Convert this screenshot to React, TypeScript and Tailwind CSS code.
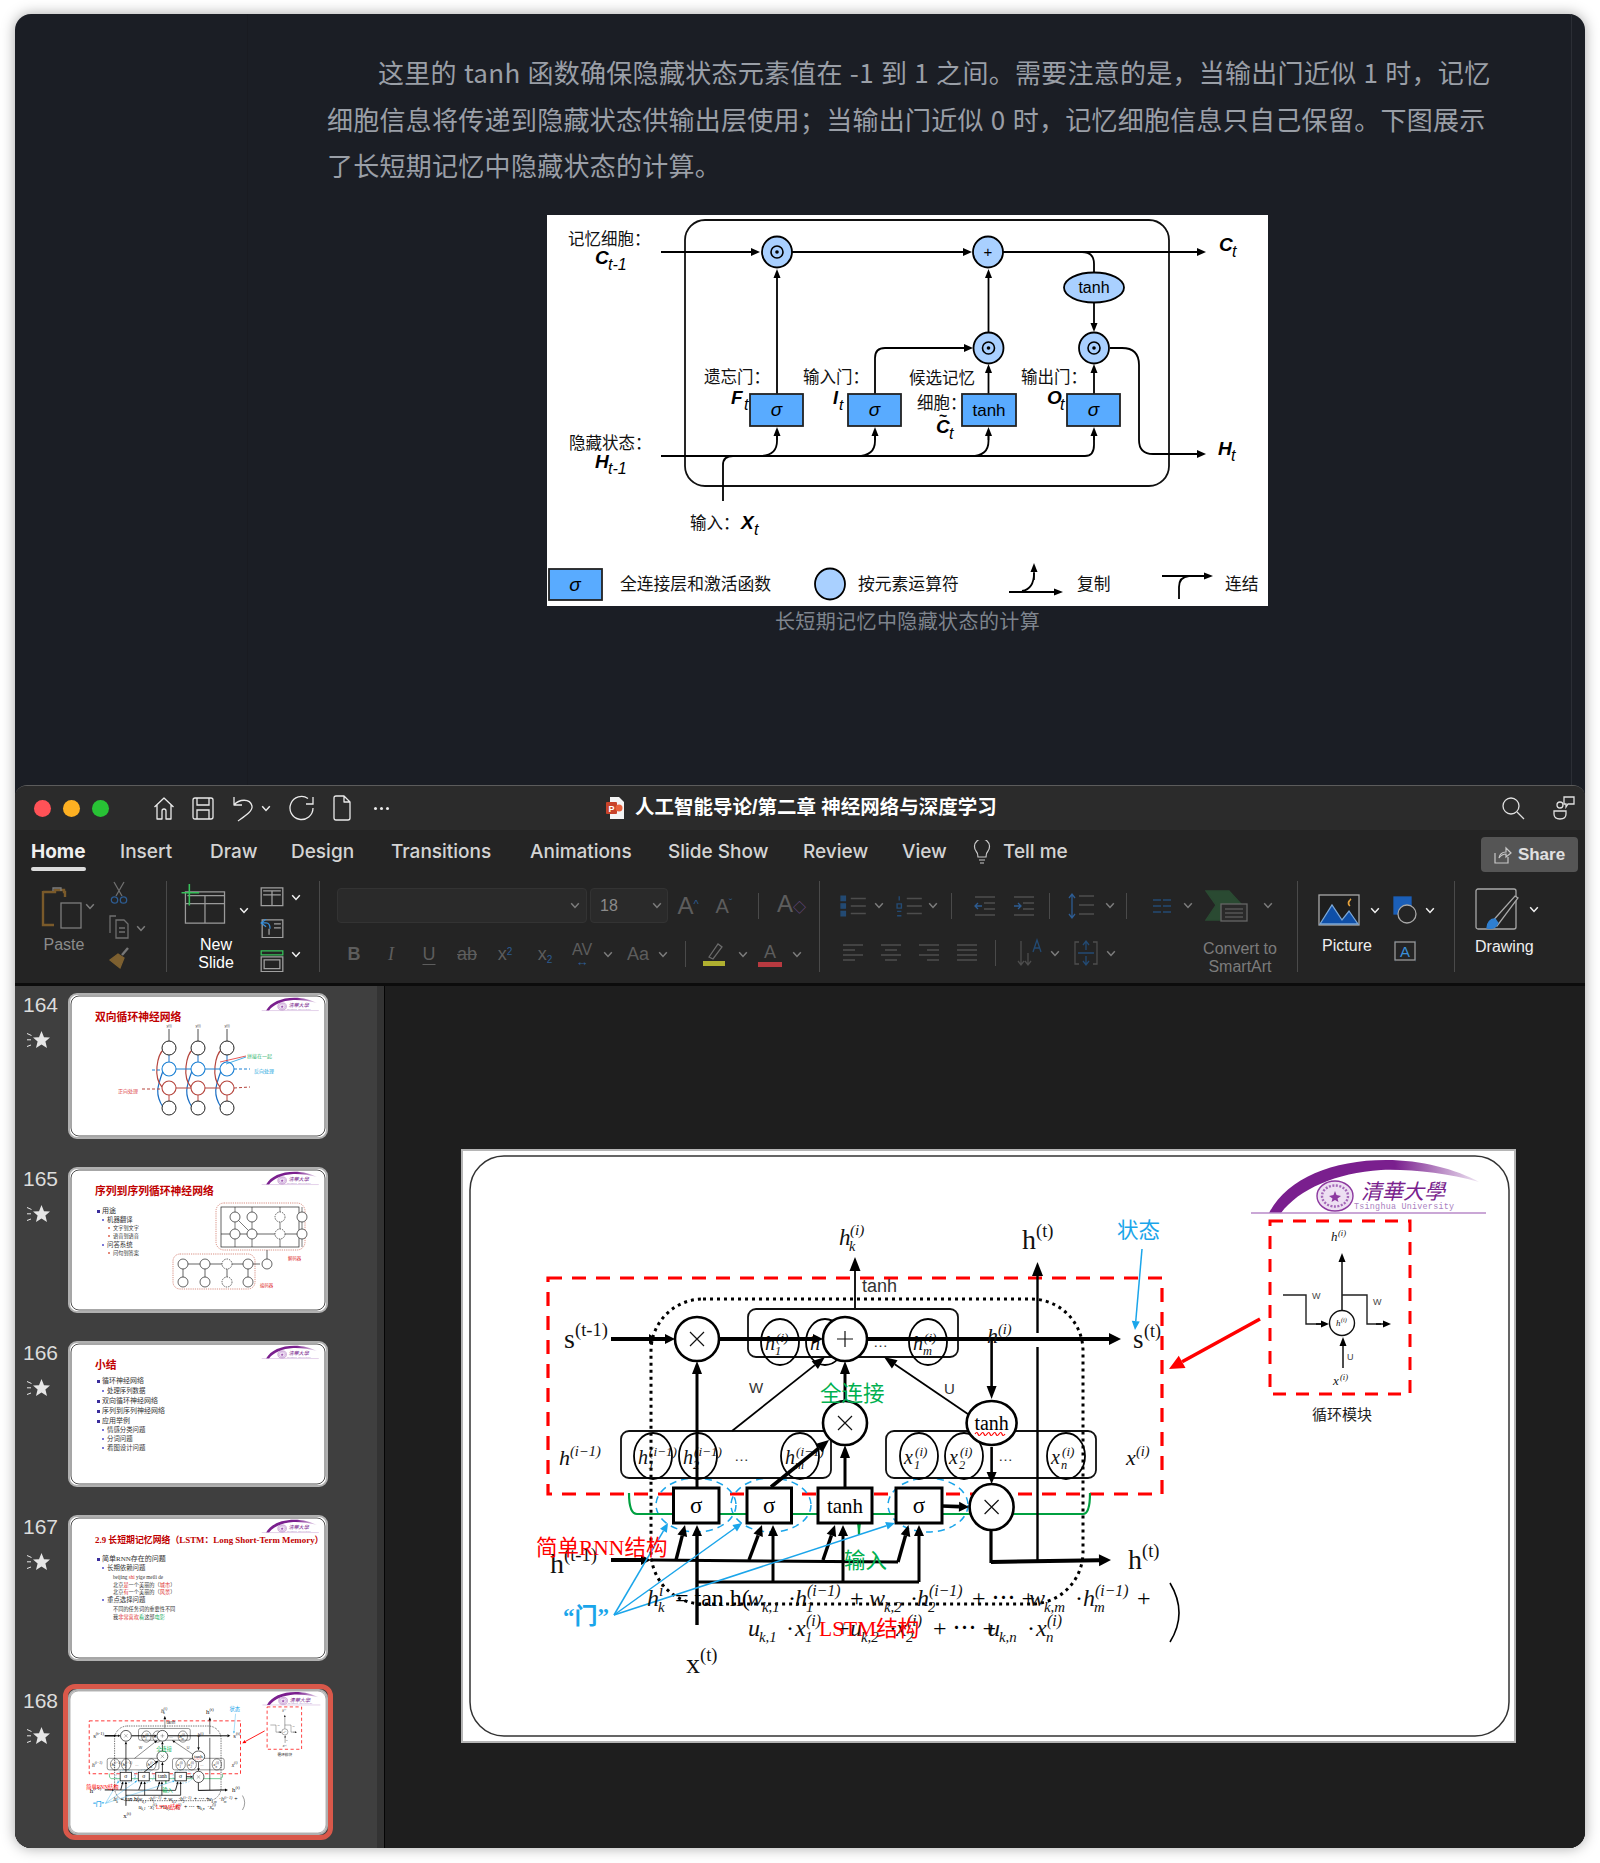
import React from "react";

const SERIF = "'Liberation Serif','Noto Sans CJK SC',serif";
const SANS = "'Liberation Sans','Noto Sans CJK SC',sans-serif";

function Arrow({ x1, y1, x2, y2, w = 2, c = "#000", h = 10, hw = 5 }: { x1: number; y1: number; x2: number; y2: number; w?: number; c?: string; h?: number; hw?: number }) {
  const a = Math.atan2(y2 - y1, x2 - x1);
  const bx = x2 - h * Math.cos(a);
  const by = y2 - h * Math.sin(a);
  const px = hw * Math.sin(a);
  const py = hw * Math.cos(a);
  return (
    <g>
      <line x1={x1} y1={y1} x2={bx} y2={by} stroke={c} strokeWidth={w} />
      <polygon points={`${x2},${y2} ${bx + px},${by - py} ${bx - px},${by + py}`} fill={c} />
    </g>
  );
}

function M({ x, y, b, sup, sub, s = 22, it = true, c = "#111", bw }: { x: number; y: number; b: string; sup?: string; sub?: string; s?: number; it?: boolean; c?: string; bw?: number }) {
  const off = bw ?? s * 0.5 * b.length;
  return (
    <g fill={c} fontFamily={SERIF} fontStyle={it ? "italic" : "normal"}>
      <text x={x} y={y} fontSize={s}>{b}</text>
      {sup && <text x={x + off} y={y - s * 0.42} fontSize={s * 0.66}>{sup}</text>}
      {sub && <text x={x + off - 1} y={y + s * 0.26} fontSize={s * 0.62}>{sub}</text>}
    </g>
  );
}

// ---------- top figure ----------
function GateDot({ x, y }: { x: number; y: number }) {
  return (
    <g>
      <ellipse cx={x} cy={y} rx={15} ry={15.5} fill="#a9d0ff" stroke="#000" strokeWidth={1.8} />
      <circle cx={x} cy={y} r={6} fill="none" stroke="#000" strokeWidth={1.6} />
      <circle cx={x} cy={y} r={1.8} fill="#000" />
    </g>
  );
}

function GateBox({ x, w, label, it = true }: { x: number; w: number; label: string; it?: boolean }) {
  return (
    <g>
      <rect x={x} y={179} width={w} height={32} fill="#59abff" stroke="#222" strokeWidth={1.8} />
      <text x={x + w / 2} y={201} textAnchor="middle" fontSize={it ? 19 : 17} fontStyle={it ? "italic" : "normal"} fill="#000">{label}</text>
    </g>
  );
}

function Sym({ x, y, b, sub, s = 19, off }: { x: number; y: number; b: string; sub: string; s?: number; off?: number }) {
  return (
    <g fontFamily={SANS} fontStyle="italic" fill="#000">
      <text x={x} y={y} fontSize={s} fontWeight="bold">{b}</text>
      <text x={x + (off ?? s * 0.68)} y={y + 6} fontSize={s * 0.85}>{sub}</text>
    </g>
  );
}

function LstmFigure() {
  return (
    <svg width="721" height="391" viewBox="0 0 721 391" className="block bg-white" fontFamily={SANS}>
      <rect x="138" y="5" width="484" height="266" rx="20" fill="none" stroke="#111" strokeWidth="1.8" />
      <Arrow x1={114} y1={37} x2={213} y2={37} h={9} hw={4} />
      <Arrow x1={245} y1={37} x2={425} y2={37} h={9} hw={4} />
      <Arrow x1={456} y1={37} x2={659} y2={37} h={9} hw={4} />
      <path d="M525 37H535Q547 37 547 49V58" fill="none" stroke="#000" strokeWidth="1.8" />
      <Arrow x1={547} y1={88} x2={547} y2={117} w={1.8} h={9} hw={3.5} />
      <Arrow x1={230} y1={179} x2={230} y2={54} w={1.8} h={9} hw={3.5} />
      <path d="M328 179V143Q328 133 338 133H416" fill="none" stroke="#000" strokeWidth="1.8" />
      <Arrow x1={410} y1={133} x2={426} y2={133} h={9} hw={4} />
      <Arrow x1={441.5} y1={179} x2={441.5} y2={149} w={1.8} h={9} hw={3.5} />
      <Arrow x1={441.5} y1={118} x2={441.5} y2={54} w={1.8} h={9} hw={3.5} />
      <Arrow x1={547} y1={179} x2={547} y2={149} w={1.8} h={9} hw={3.5} />
      <path d="M563 133H575Q592 133 592 150V225Q592 239 606 239H650" fill="none" stroke="#000" strokeWidth="1.8" />
      <Arrow x1={640} y1={239} x2={659} y2={239} h={9} hw={4} />
      <path d="M114 241H538Q547 241 547 230V220M212 241Q230 241 230 226V220M310 241Q328 241 328 226V220M424 241Q441.5 241 441.5 226V220" fill="none" stroke="#000" strokeWidth="1.8" />
      <Arrow x1={230} y1={225} x2={230} y2={212} w={1.5} h={9} hw={3.5} />
      <Arrow x1={328} y1={225} x2={328} y2={212} w={1.5} h={9} hw={3.5} />
      <Arrow x1={441.5} y1={225} x2={441.5} y2={212} w={1.5} h={9} hw={3.5} />
      <Arrow x1={547} y1={225} x2={547} y2={212} w={1.5} h={9} hw={3.5} />
      <path d="M176 286V250Q176 241 186 241" fill="none" stroke="#000" strokeWidth="1.8" />

      <GateDot x={230} y={37} />
      <ellipse cx={441} cy={37} rx={15} ry={15.5} fill="#a9d0ff" stroke="#000" strokeWidth="1.8" />
      <text x={441} y={42} textAnchor="middle" fontSize="15">+</text>
      <GateDot x={441.5} y={133} />
      <GateDot x={547} y={133} />
      <ellipse cx={547} cy={72.5} rx={30} ry={15} fill="#a9d0ff" stroke="#000" strokeWidth="1.8" />
      <text x={547} y={78} textAnchor="middle" fontSize="16">tanh</text>
      <GateBox x={203} w={53} label="σ" />
      <GateBox x={301} w={53} label="σ" />
      <GateBox x={415} w={54} label="tanh" it={false} />
      <GateBox x={520} w={53} label="σ" />

      <g fontSize="16.5" fill="#111">
        <text x={21} y={30}>记忆细胞：</text>
        <text x={22} y={234}>隐藏状态：</text>
        <text x={157} y={168}>遗忘门：</text>
        <text x={256} y={168}>输入门：</text>
        <text x={362} y={169}>候选记忆</text>
        <text x={370} y={194}>细胞：</text>
        <text x={474} y={168}>输出门：</text>
        <text x={143} y={314}>输入：</text>
      </g>
      <Sym x={48} y={49} b="C" sub="t-1" />
      <Sym x={48} y={253} b="H" sub="t-1" />
      <Sym x={184} y={189} b="F" sub="t" />
      <Sym x={286} y={189} b="I" sub="t" s={18} off={6} />
      <Sym x={389} y={218} b="C" sub="t" />
      <text x={392} y={206} fontSize="14" fontWeight="bold">~</text>
      <Sym x={500} y={189} b="O" sub="t" />
      <Sym x={672} y={36} b="C" sub="t" />
      <Sym x={671} y={240} b="H" sub="t" />
      <Sym x={194} y={314} b="X" sub="t" />

      <rect x="2" y="354" width="53" height="31" fill="#59abff" stroke="#222" strokeWidth="1.8" />
      <text x="28" y="376" textAnchor="middle" fontSize="19" fontStyle="italic">σ</text>
      <text x="73" y="375" fontSize="16.8" fill="#111">全连接层和激活函数</text>
      <ellipse cx={283} cy={369} rx={15} ry={15.5} fill="#a9d0ff" stroke="#000" strokeWidth="1.8" />
      <text x="311" y="375" fontSize="16.8" fill="#111">按元素运算符</text>
      <Arrow x1={462} y1={377} x2={516} y2={377} h={9} hw={3.5} />
      <path d="M475 376Q487 374 487 358" fill="none" stroke="#000" strokeWidth="1.8" />
      <Arrow x1={487} y1={365} x2={487} y2={348} w={1.5} h={9} hw={3.5} />
      <text x="530" y="375" fontSize="16.8" fill="#111">复制</text>
      <Arrow x1={615} y1={361} x2={666} y2={361} h={9} hw={3.5} />
      <path d="M632 384V372Q632 362 642 361" fill="none" stroke="#000" strokeWidth="1.8" />
      <text x="678" y="375" fontSize="16.8" fill="#111">连结</text>
    </svg>
  );
}

// ---------- slide art ----------
function Logo() {
  return (
    <g>
      <defs>
        <linearGradient id="arc" x1="0" y1="0" x2="1" y2="0">
          <stop offset="0" stopColor="#7a1f8e" />
          <stop offset="0.6" stopColor="#7a1f8e" />
          <stop offset="1" stopColor="#efe6f3" />
        </linearGradient>
      </defs>
      <path d="M808 64C826 30 870 11 925 11C960 11 995 20 1018 33C985 24 950 20 920 21C875 24 838 40 820 64Z" fill="url(#arc)" />
      <line x1="790" y1="64" x2="1025" y2="64" stroke="#b98ac9" strokeWidth="1.6" />
      <ellipse cx="874" cy="47" rx="18" ry="15" fill="#eddff2" stroke="#8d3aa0" strokeWidth="1.4" />
      <ellipse cx="874" cy="47" rx="13" ry="10.5" fill="none" stroke="#a468b8" strokeWidth="2.4" strokeDasharray="2 1.5" />
      <polygon points="874,42 875.5,46 880,47 876.5,49.5 877.5,53 874,51 870.5,53 871.5,49.5 868,47 872.5,46" fill="#8d3aa0" />
      <text x="900" y="50" fontSize="21" fontStyle="italic" fill="#7a1f8e" fontFamily={SERIF}>清華大學</text>
      <text x="893" y="60" fontSize="8.4" fill="#a97fc0" fontFamily="'Liberation Mono',monospace" letterSpacing="0.25">Tsinghua University</text>
    </g>
  );
}

function Node({ x, y, r = 22, ry, mark }: { x: number; y: number; r?: number; ry?: number; mark?: "x" | "+" }) {
  return (
    <g>
      <ellipse cx={x} cy={y} rx={r} ry={ry ?? r} fill="#fff" stroke="#000" strokeWidth="2.6" />
      {mark === "x" && <path d={`M${x - 7} ${y - 7}L${x + 7} ${y + 7}M${x + 7} ${y - 7}L${x - 7} ${y + 7}`} stroke="#111" strokeWidth="1.2" />}
      {mark === "+" && <path d={`M${x - 8} ${y}H${x + 8}M${x} ${y - 8}V${y + 8}`} stroke="#111" strokeWidth="1.2" />}
    </g>
  );
}

function Gate({ x, w, label, s = 20 }: { x: number; w: number; label: string; s?: number }) {
  return (
    <g>
      <rect x={x} y={339} width={w} height={35} fill="#fff" stroke="#000" strokeWidth="3" />
      <text x={x + w / 2} y={364} textAnchor="middle" fontSize={s} fontFamily={SERIF}>{label}</text>
    </g>
  );
}

function Cell({ x, y, b, sup, sub }: { x: number; y: number; b: string; sup: string; sub: string }) {
  return (
    <g>
      <ellipse cx={x} cy={y} rx={19} ry={23} fill="none" stroke="#000" strokeWidth="1.8" />
      <M x={x - 15} y={y + 8} b={b} sup={sup} sub={sub} s={20} bw={11} />
    </g>
  );
}

function LstmSlide() {
  return (
    <g>
      <rect x="9" y="7" width="1039" height="580" rx="34" fill="none" stroke="#333" strokeWidth="1.5" />
      <Logo />
      <rect x="87" y="129" width="614" height="216" fill="none" stroke="#f00" strokeWidth="3.2" strokeDasharray="14 10" />
      <rect x="190" y="150" width="432" height="305" rx="52" fill="none" stroke="#000" strokeWidth="3" strokeDasharray="3 4" />
      <ellipse cx="235" cy="356" rx="40" ry="27" fill="none" stroke="#1aa5ea" strokeWidth="1.5" strokeDasharray="7 5" />
      <ellipse cx="310" cy="356" rx="40" ry="27" fill="none" stroke="#1aa5ea" strokeWidth="1.5" strokeDasharray="7 5" />
      <ellipse cx="467" cy="356" rx="40" ry="27" fill="none" stroke="#1aa5ea" strokeWidth="1.5" strokeDasharray="7 5" />
      <path d="M168 344Q168 365 176 365H390Q398 365 398 386Q398 365 406 365H622Q629 365 629 344" fill="none" stroke="#00a040" strokeWidth="2.2" />

      <rect x="287" y="160" width="210" height="48" rx="8" fill="none" stroke="#111" strokeWidth="1.8" />
      <rect x="160" y="282" width="210" height="47" rx="8" fill="none" stroke="#111" strokeWidth="1.8" />
      <rect x="425" y="282" width="210" height="47" rx="8" fill="none" stroke="#111" strokeWidth="1.8" />
      <Cell x={319} y={193} b="h" sup="(i)" sub="1" />
      <Cell x={364} y={193} b="h" sup="" sub="" />
      <Cell x={467} y={193} b="h" sup="(i)" sub="m" />
      <Cell x={192} y={307} b="h" sup="(i−1)" sub="1" />
      <Cell x={237} y={307} b="h" sup="(i−1)" sub="2" />
      <Cell x={339} y={307} b="h" sup="(i−1)" sub="m" />
      <Cell x={458} y={307} b="x" sup="(i)" sub="1" />
      <Cell x={503} y={307} b="x" sup="(i)" sub="2" />
      <Cell x={605} y={307} b="x" sup="(i)" sub="n" />
      <text x="273" y="312" fontSize="15" fill="#333">…</text>
      <text x="537" y="312" fontSize="15" fill="#333">…</text>
      <text x="412" y="198" fontSize="15" fill="#333">…</text>

      {/* flow lines */}
      <Arrow x1={394} y1={159} x2={394} y2={108} w={1.8} h={14} hw={5.5} />
      <Arrow x1={576.5} y1={184} x2={576.5} y2={113} w={2.4} h={14} hw={5.5} />
      <line x1="576.5" y1="198" x2="576.5" y2="412" stroke="#000" strokeWidth="2.4" />
      <Arrow x1={150} y1={190} x2={214} y2={190} w={4} h={10} hw={5} />
      <line x1="150" y1="190" x2="190" y2="190" stroke="#000" strokeWidth="4" />
      <Arrow x1={190} y1={190} x2={196} y2={190} w={3} h={8} hw={5} />
      <Arrow x1={258} y1={190} x2={362} y2={190} w={4} h={10} hw={5} />
      <Arrow x1={406} y1={190} x2={660} y2={190} w={4} h={12} hw={6} />
      <Arrow x1={236} y1={339} x2={236} y2={212} w={3} h={13} hw={5} />
      <Arrow x1={384} y1={252} x2={384} y2={212} w={3} h={13} hw={5} />
      <Arrow x1={271} y1={282} x2={364} y2={208} w={1.8} h={13} hw={5} />
      <Arrow x1={526} y1={278} x2={423} y2={208} w={1.8} h={13} hw={5} />
      <Arrow x1={530.6} y1={190} x2={530.6} y2={250} w={2.6} h={13} hw={5} />
      <Arrow x1={530.6} y1={298} x2={530.6} y2={335} w={2.6} h={12} hw={5} />
      <Arrow x1={384} y1={339} x2={384} y2={296} w={3} h={13} hw={5} />
      <Arrow x1={310} y1={338} x2={368} y2={291} w={3.6} h={13} hw={5.5} />
      <Arrow x1={481} y1={357} x2={508} y2={358} w={3.6} h={10} hw={5} />

      <Node x={236} y={190} mark="x" />
      <Node x={384} y={190} mark="+" />
      <Node x={384} y={274} mark="x" />
      <Node x={530.6} y={274} r={25} ry={22} />
      <text x={530.6} y={281} textAnchor="middle" fontSize="20" fontFamily={SERIF}>tanh</text>
      <path d="M514 285q2 -3 3 0t3 0 3 0 3 0 3 0 3 0 3 0 3 0 3 0 3 0" fill="none" stroke="#f00" strokeWidth="1.2" />
      <Node x={530.6} y={358} r={22} ry={23} mark="x" />

      <line x1="530" y1="381" x2="530" y2="414" stroke="#000" strokeWidth="3.2" />
      <Arrow x1={530} y1={413} x2={650} y2={411} w={4} h={12} hw={6} />
      <Gate x={212.5} w={45.5} label="σ" s={23} />
      <Gate x={286} w={44.5} label="σ" s={23} />
      <Gate x={357} w={54} label="tanh" s={21} />
      <Gate x={435} w={46} label="σ" s={23} />

      <Arrow x1={150} y1={411} x2={190} y2={411} w={4} h={10} hw={5} />
      <line x1="190" y1="411" x2="437" y2="413" stroke="#000" strokeWidth="3" />
      <Arrow x1={215} y1={411} x2={224} y2={376} w={3.4} h={11} hw={5} />
      <Arrow x1={288} y1={411} x2={301} y2={376} w={3.4} h={11} hw={5} />
      <Arrow x1={362} y1={411} x2={374} y2={376} w={3.4} h={11} hw={5} />
      <Arrow x1={437} y1={413} x2={447.5} y2={376} w={3.4} h={11} hw={5} />
      <Arrow x1={236} y1={476} x2={236} y2={376} w={3.4} h={11} hw={5} />
      <line x1="236" y1="433" x2="458" y2="433" stroke="#000" strokeWidth="3" />
      <Arrow x1={312} y1={433} x2={312} y2={376} w={3} h={11} hw={5} />
      <Arrow x1={382} y1={433} x2={382} y2={376} w={3} h={11} hw={5} />
      <Arrow x1={458} y1={433} x2={458} y2={376} w={3} h={11} hw={5} />

      {/* blue callouts */}
      <Arrow x1={153} y1={466} x2={207} y2={374} w={1.5} c="#1aa5ea" h={9} hw={4} />
      <Arrow x1={153} y1={466} x2={281} y2={374} w={1.5} c="#1aa5ea" h={9} hw={4} />
      <Arrow x1={153} y1={466} x2={434} y2={374} w={1.5} c="#1aa5ea" h={9} hw={4} />
      <Arrow x1={681} y1={100} x2={674} y2={181} w={1.5} c="#1aa5ea" h={9} hw={4} />

      {/* labels */}
      <M x={103} y={199} b="s" sup="(t-1)" s={28} it={false} bw={11} />
      <M x={672} y={199} b="s" sup="(t)" s={27} it={false} bw={11} />
      <M x={561} y={100} b="h" sup="(t)" s={28} it={false} bw={14} />
      <M x={667} y={420} b="h" sup="(t)" s={28} it={false} bw={14} />
      <M x={89} y={424} b="h" sup="(t-1)" s={28} it={false} bw={14} />
      <M x={225} y={524} b="x" sup="(t)" s={28} it={false} bw={14} />
      <M x={378} y={96} b="h" sup="(i)" sub="k" s={23} bw={11} />
      <M x={526} y={194} b="h" sup="(i)" s={22} bw={11} />
      <M x={98} y={316} b="h" sup="(i−1)" s={22} bw={11} />
      <M x={665} y={316} b="x" sup="(i)" s={22} bw={10} />
      <text x="401" y="143" fontSize="18" fontFamily={SANS} fill="#333">tanh</text>
      <text x="288" y="244" fontSize="15" fontFamily={SANS} fill="#333">W</text>
      <text x="483" y="245" fontSize="15" fontFamily={SANS} fill="#333">U</text>
      <text x="359" y="252" fontSize="21.5" fill="#00b050" fontFamily={SERIF}>全连接</text>
      <text x="656" y="89" fontSize="21.5" fill="#1aa5ea" fontFamily={SERIF}>状态</text>
      <text x="75" y="406" fontSize="21.5" fill="#f00" fontFamily={SERIF}>简单RNN结构</text>
      <text x="383" y="419" fontSize="21.5" fill="#00b050" fontFamily={SERIF}>输入</text>
      <text x="102" y="475" fontSize="23" fontWeight="bold" fill="#1aa5ea" fontFamily={SERIF}>“门”</text>

      {/* formula */}
      <M x={186} y={457} b="h" sup="i" sub="k" s={24} bw={12} />
      <text x="214" y="457" fontSize="24" fontFamily={SERIF}>= tan h(</text>
      <M x={286} y={457} b="w" sub="k,1" s={24} bw={16} />
      <text x="327" y="457" fontSize="24" fontFamily={SERIF}>·</text>
      <M x={334} y={457} b="h" sup="(i−1)" sub="1" s={24} bw={12} />
      <text x="389" y="457" fontSize="24" fontFamily={SERIF}>+</text>
      <M x={408} y={457} b="w" sub="k,2" s={24} bw={16} />
      <text x="449" y="457" fontSize="24" fontFamily={SERIF}>·</text>
      <M x={456} y={457} b="h" sup="(i−1)" sub="2" s={24} bw={12} />
      <text x="511" y="457" fontSize="24" fontFamily={SERIF}>+ ⋯ +</text>
      <M x={568} y={457} b="w" sub="k,m" s={24} bw={16} />
      <text x="614" y="457" fontSize="24" fontFamily={SERIF}>·</text>
      <M x={622} y={457} b="h" sup="(i−1)" sub="m" s={24} bw={12} />
      <text x="676" y="457" fontSize="24" fontFamily={SERIF}>+</text>
      <M x={287} y={487} b="u" sub="k,1" s={24} bw={12} />
      <text x="325" y="487" fontSize="24" fontFamily={SERIF}>·</text>
      <M x={334} y={487} b="x" sup="(i)" sub="1" s={24} bw={11} />
      <text x="375" y="487" fontSize="24" fontFamily={SERIF}>+</text>
      <M x={389} y={487} b="u" sub="k,2" s={24} bw={12} />
      <text x="428" y="487" fontSize="24" fontFamily={SERIF}>·</text>
      <M x={435} y={487} b="x" sup="(i)" sub="2" s={24} bw={11} />
      <text x="472" y="487" fontSize="24" fontFamily={SERIF}>+ ⋯ +</text>
      <M x={527} y={487} b="u" sub="k,n" s={24} bw={12} />
      <text x="566" y="487" fontSize="24" fontFamily={SERIF}>·</text>
      <M x={575} y={487} b="x" sup="(i)" sub="n" s={24} bw={11} />
      <path d="M709 434Q727 464 709 493" fill="none" stroke="#000" strokeWidth="1.6" />
      <text x="358" y="487" fontSize="21.5" fill="#f00" fontFamily={SERIF}>LSTM结构</text>

      {/* right module */}
      <rect x="809" y="72" width="140" height="173" fill="none" stroke="#f00" strokeWidth="3" strokeDasharray="13 10" />
      <M x={870} y={92} b="h" sup="(i)" s={13} bw={7} />
      <Arrow x1={881} y1={161} x2={881} y2={104} w={1.4} h={9} hw={3.5} />
      <path d="M822 146H845V175H860" fill="none" stroke="#222" strokeWidth="1.4" />
      <Arrow x1={855} y1={175} x2={868} y2={175} w={1.4} h={8} hw={3.5} />
      <path d="M881 146H906V175H920" fill="none" stroke="#222" strokeWidth="1.4" />
      <Arrow x1={915} y1={175} x2={930} y2={175} w={1.4} h={8} hw={3.5} />
      <Arrow x1={882} y1={219} x2={882} y2={188} w={1.4} h={9} hw={3.5} />
      <circle cx="881" cy="174" r="12.5" fill="#fff" stroke="#111" strokeWidth="1.4" />
      <M x={875} y={177} b="h" sup="(i)" s={9} bw={5} />
      <text x="851" y="150" fontSize="9" fontFamily={SANS} fill="#444">W</text>
      <text x="912" y="156" fontSize="9" fontFamily={SANS} fill="#444">W</text>
      <text x="886" y="211" fontSize="9" fontFamily={SANS} fill="#444">U</text>
      <M x={872} y={236} b="x" sup="(i)" s={13} bw={7} />
      <text x="851" y="271" fontSize="15" fontFamily={SERIF} fill="#222">循环模块</text>
      <Arrow x1={799} y1={170} x2={708} y2={220} w={3.6} c="#f00" h={15} hw={7} />
    </g>
  );
}

// ---------- small thumbnails, drawn at 260x146 ----------
const TITLE = "#c00000";

function ThumbFrame({ children, title }: { children?: React.ReactNode; title: string }) {
  return (
    <svg width="256" height="142" viewBox="0 0 256 142" className="block">
      <rect x="1" y="1" width="254" height="140" rx="8" fill="#fff" stroke="#222" strokeWidth="0.8" />
      <g transform="scale(0.2427)"><Logo /></g>
      <text x="25" y="26" fontSize="10.8" fontWeight="bold" fill={TITLE} fontFamily={SERIF}>{title}</text>
      {children}
    </svg>
  );
}

function Bullets({ rows }: { rows: [number, number, string][] }) {
  return (
    <g fontFamily={SERIF} fill="#333">
      {rows.map(([lvl, y, t], i) => {
        const x = lvl === 0 ? 32 : lvl === 1 ? 37 : 43;
        const mc = lvl === 0 ? "#3a2d9c" : lvl === 1 ? "#7b78d8" : "#e58a7a";
        return (
          <g key={i}>
            <rect x={x - 5} y={y - 3} width={lvl === 0 ? 3 : 2} height={lvl === 0 ? 3 : 2} fill={mc} />
            <text x={x} y={y} fontSize={lvl === 0 ? 7 : lvl === 1 ? 6.4 : 5.2}>{t}</text>
          </g>
        );
      })}
    </g>
  );
}

function Thumb164() {
  const xs = [99, 128, 157];
  return (
    <ThumbFrame title="双向循环神经网络">
      {xs.map((x) => (
        <g key={x} fill="none">
          <path d={`M${x - 6} 112C${x - 14} 100 ${x - 12} 92 ${x - 6} 76`} stroke="#1b6fc4" strokeWidth="1.2" />
          <path d={`M${x - 7} 92C${x - 16} 82 ${x - 12} 60 ${x - 5} 54`} stroke="#b5443c" strokeWidth="1.2" />
          <line x1={x} y1="46" x2={x} y2="34" stroke="#222" strokeWidth="0.8" />
          <line x1={x} y1="68" x2={x} y2="60" stroke="#1b6fc4" strokeWidth="1" />
          <line x1={x} y1="106" x2={x} y2="100" stroke="#b5443c" strokeWidth="1" />
          <circle cx={x} cy="53" r="7" fill="#fff" stroke="#222" strokeWidth="1" />
          <circle cx={x} cy="74" r="7" fill="#fff" stroke="#1b80d4" strokeWidth="1.1" />
          <circle cx={x} cy="93" r="7" fill="#fff" stroke="#b5443c" strokeWidth="1.1" />
          <circle cx={x} cy="113" r="7" fill="#fff" stroke="#222" strokeWidth="1" />
          <text x={x} y="32" fontSize="3.6" textAnchor="middle" fill="#444" stroke="none">y(t)</text>
        </g>
      ))}
      <line x1="82" y1="75" x2="92" y2="75" stroke="#1b80d4" strokeWidth="1" strokeDasharray="3 2" />
      <line x1="106" y1="74" x2="121" y2="74" stroke="#1b80d4" strokeWidth="1" />
      <line x1="135" y1="74" x2="150" y2="74" stroke="#1b80d4" strokeWidth="1" />
      <line x1="164" y1="74" x2="180" y2="74" stroke="#1b80d4" strokeWidth="1" strokeDasharray="3 2" />
      <line x1="72" y1="94" x2="92" y2="94" stroke="#b5443c" strokeWidth="1" strokeDasharray="3 2" />
      <line x1="106" y1="93" x2="121" y2="93" stroke="#b5443c" strokeWidth="1" />
      <line x1="135" y1="93" x2="150" y2="93" stroke="#b5443c" strokeWidth="1" />
      <line x1="164" y1="93" x2="180" y2="92" stroke="#b5443c" strokeWidth="1" strokeDasharray="3 2" />
      <line x1="176" y1="61" x2="150" y2="67" stroke="#e03030" strokeWidth="0.8" />
      <line x1="176" y1="62" x2="156" y2="69" stroke="#1b9ae0" strokeWidth="0.8" />
      <text x="177" y="63" fontSize="5" fill="#2db36b" fontFamily={SERIF}>拼接在一起</text>
      <text x="184" y="78" fontSize="5" fill="#2aa9e0" fontFamily={SERIF}>反向处理</text>
      <text x="48" y="98" fontSize="5" fill="#e04a4a" fontFamily={SERIF}>正向处理</text>
    </ThumbFrame>
  );
}

function Thumb165() {
  const top = [165, 182, 210, 232];
  const bottom = [113, 135, 157, 178];
  return (
    <ThumbFrame title="序列到序列循环神经网络">
      <Bullets rows={[[0, 44, "用途"], [1, 53, "机器翻译"], [2, 61, "文字到文字"], [2, 69, "语音到语音"], [1, 78, "问答系统"], [2, 86, "问句到答案"]]} />
      <rect x="146" y="34" width="89" height="47" rx="8" fill="none" stroke="#c9604f" strokeWidth="0.7" strokeDasharray="1.2 1" />
      <rect x="103" y="85" width="82" height="35" rx="7" fill="none" stroke="#c9604f" strokeWidth="0.7" strokeDasharray="1.2 1" />
      <rect x="151" y="38" width="78" height="40" fill="none" stroke="#222" strokeWidth="0.7" />
      <line x1="151" y1="65" x2="229" y2="65" stroke="#222" strokeWidth="0.7" />
      {top.map((x) => <line key={x} x1={x} y1="38" x2={x} y2="78" stroke="#222" strokeWidth="0.6" />)}
      <line x1="165" y1="48" x2="182" y2="65" stroke="#222" strokeWidth="0.6" />
      {top.map((x) => (
        <g key={x} fill="#fff" stroke="#222" strokeWidth="0.7">
          <circle cx={x} cy="48" r="5" strokeDasharray={x === 210 ? "1.5 1" : undefined} />
          <circle cx={x} cy="65" r="5" strokeDasharray={x === 210 ? "1.5 1" : undefined} />
        </g>
      ))}
      <line x1="108" y1="95" x2="190" y2="95" stroke="#222" strokeWidth="0.7" />
      <line x1="197" y1="81" x2="197" y2="90" stroke="#222" strokeWidth="0.7" />
      {bottom.map((x) => (
        <g key={x} fill="#fff" stroke="#222" strokeWidth="0.7">
          <line x1={x} y1="95" x2={x} y2="112" />
          <circle cx={x} cy="95" r="5" strokeDasharray={x === 157 ? "1.5 1" : undefined} />
          <circle cx={x} cy="113" r="5" strokeDasharray={x === 157 ? "1.5 1" : undefined} />
        </g>
      ))}
      <circle cx="197" cy="95" r="5" fill="#fff" stroke="#222" strokeWidth="0.7" />
      <text x="218" y="91" fontSize="4.4" fill="#e03030" fontFamily={SERIF}>解码器</text>
      <text x="190" y="118" fontSize="4.4" fill="#e03030" fontFamily={SERIF}>编码器</text>
    </ThumbFrame>
  );
}

function Thumb166() {
  return (
    <ThumbFrame title="小结">
      <Bullets rows={[[0, 40, "循环神经网络"], [1, 50, "处理序列数据"], [0, 60, "双向循环神经网络"], [0, 70, "序列到序列神经网络"], [0, 80, "应用举例"], [1, 89, "情感分类问题"], [1, 98, "分词问题"], [1, 107, "看图设计问题"]]} />
    </ThumbFrame>
  );
}

function Thumb167() {
  return (
    <ThumbFrame title="">
      <text x="25" y="26" fontSize="8.9" fontWeight="bold" fill={TITLE} fontFamily={SERIF}>2.9 长短期记忆网络（LSTM：Long Short-Term Memory）</text>
      <Bullets rows={[[0, 44, "简单RNN存在的问题"], [1, 53, "长期依赖问题"], [1, 85, "重点选择问题"]]} />
      <g fontFamily={SERIF} fontSize="5.2" fill="#333">
        <text x="43" y="62">beijing <tspan fill="#e03030">shi</tspan> yige meili de</text>
        <text x="43" y="69.5">北京<tspan fill="#e03030">是</tspan>一个美丽的（<tspan fill="#e03030">城市</tspan>）</text>
        <text x="43" y="77">北京<tspan fill="#e03030">有</tspan>一个美丽的（<tspan fill="#e03030">风景</tspan>）</text>
        <text x="43" y="94">不同的任务词的重要性不同</text>
        <text x="43" y="102">我<tspan fill="#e03030">非常喜欢</tspan><tspan fill="#2db36b">看</tspan>这部<tspan fill="#2db36b">电影</tspan></text>
      </g>
    </ThumbFrame>
  );
}

function Thumb168() {
  return (
    <svg width="256" height="142" viewBox="9 7 1039 580" preserveAspectRatio="none" className="block">
      <LstmSlide />
    </svg>
  );
}

function StarMark() {
  return (
    <svg width="24" height="20" viewBox="0 0 24 20" className="mt-[13px] ml-[3px] text-[#e6e6e6]">
      <polygon points="15.5,1 18,7.3 24,7.5 19.4,11.5 21,18 15.5,14.4 10,18 11.6,11.5 7,7.5 13,7.3" fill="currentColor" />
      <path d="M1 3.5 5.5 5.5M1 9.8H5M1 16.5 5 15" stroke="currentColor" strokeWidth="1" />
    </svg>
  );
}

function SlideRow({ n, selected, children }: { n: number; selected?: boolean; children: React.ReactNode }) {
  return (
    <div className="flex h-[146px]">
      <div className="w-[53px] pl-[8px] text-[21px] leading-[24px] text-[#dcdcdc]">
        {n}
        <StarMark />
      </div>
      {selected ? (
        <div className="-m-[5px] rounded-[12px] border-[5px] border-[#d9584a]">
          <div className="h-[146px] w-[260px] rounded-[9px] border-2 border-[#b0b0b0] bg-white">{children}</div>
        </div>
      ) : (
        <div className="h-[146px] w-[260px] rounded-[9px] border-2 border-[#b0b0b0] bg-white">{children}</div>
      )}
    </div>
  );
}

// ---------- ribbon icons ----------
function Chev({ c = "text-[#7c7c7c]" }: { c?: string }) {
  return (
    <svg width="10" height="7" viewBox="0 0 10 7" className={c}>
      <path d="M1.2 1.2 5 5.4 8.8 1.2" fill="none" stroke="currentColor" strokeWidth="1.5" />
    </svg>
  );
}

const W = "text-[#f0f0f0]";

function Ic({ w, h = 20, vb, children, cl = "" }: { w: number; h?: number; vb?: string; children: React.ReactNode; cl?: string }) {
  return (
    <svg width={w} height={h} viewBox={vb ?? `0 0 ${w} ${h}`} fill="none" stroke="currentColor" strokeWidth="1.3" className={cl}>
      {children}
    </svg>
  );
}

function Sep({ h = "h-[26px]", cl = "" }: { h?: string; cl?: string }) {
  return <div className={`w-px bg-[#4a4a4a] ${h} ${cl}`} />;
}

function ListLines({ c = "#4d4d4d" }: { c?: string }) {
  return <path d="M10 3H24M10 10H24M10 17H24" stroke={c} strokeWidth="1.5" />;
}

function AlignIcon({ d }: { d: string }) {
  return (
    <Ic w={24} h={20} cl="text-[#4d4d4d]">
      <path d={d} strokeWidth="1.5" />
    </Ic>
  );
}

function Ribbon() {
  return (
    <div className="flex h-[108px] bg-[#242424] text-[16px] leading-[18px]">
      {/* clipboard */}
      <div className="flex w-[152px] h-[91px] mt-[6px] border-r border-[#4a4a4a]">
        <div className="ml-[24px] w-[50px] flex flex-col items-center">
          <Ic w={42} h={42} cl="-ml-[6px] mt-[6px] text-[#7d7d7d]">
            <path d="M3 5H15V3H24V5H25V10" stroke="#7a5a2a" strokeWidth="2.4" />
            <path d="M3 4V38H14" stroke="#7a5a2a" strokeWidth="2.4" />
            <path d="M13 4V1H21V4" />
            <rect x="21" y="16" width="20" height="25" />
          </Ic>
          <div className="mt-[7px] text-[#8b8b8b]">Paste</div>
        </div>
        <div className="-ml-[7px] mt-[22px] w-[16px] h-[10px] flex justify-center"><Chev /></div>
        <div className="flex flex-col items-center w-[30px] ml-[6px]">
          <Ic w={18} h={24} cl="text-[#6f6f6f]">
            <path d="M4 1 12 15M14 1 6 15" />
            <circle cx="4.5" cy="19" r="3.2" stroke="#2d5c92" />
            <circle cx="13.5" cy="19" r="3.2" stroke="#2d5c92" />
          </Ic>
          <Ic w={24} h={26} cl="mt-[8px] text-[#6f6f6f]">
            <path d="M3 20V3H9M9 7H17L21 11V25H9Z" />
            <path d="M12 15H18M12 19H18" />
          </Ic>
          <Ic w={24} h={24} cl="mt-[7px]">
            <path d="M3 14 13 22 17 12 11 8Z" fill="#7d6030" stroke="#7d6030" />
            <path d="M15 9 21 2" stroke="#777" strokeWidth="2.4" />
          </Ic>
        </div>
        <div className="mt-[44px] ml-[2px]"><Chev /></div>
      </div>

      {/* new slide */}
      <div className="flex w-[153px] h-[91px] mt-[6px] border-r border-[#4a4a4a] text-[#e8e8e8]">
        <div className="ml-[6px] w-[62px] flex flex-col items-center">
          <Ic w={46} h={44} cl="mt-[3px] text-[#9a9a9a]">
            <path d="M4 8H44V40H4Z" />
            <path d="M6 12H44M24 12V40M4 20H44" />
            <path d="M8 0V22M0 9H18" stroke="#37c05a" strokeWidth="1.6" />
          </Ic>
          <div className="mt-[9px] ml-[24px] w-[60px] shrink-0 text-center leading-[18px] text-white">New<br />Slide</div>
        </div>
        <div className="mt-[26px] ml-[4px]"><Chev c={W} /></div>
        <div className="ml-[11px] flex flex-col gap-[12px] items-center">
          <Ic w={24} h={20} cl="mt-[6px] text-[#a0a0a0]"><path d="M1 1H23V19H1ZM3 4H21M12 4V19M3 8H21" /></Ic>
          <Ic w={24} h={20} cl="text-[#a0a0a0]"><path d="M2 1H23V19H2ZM14 5H21M14 9H21M9 10V16" /><path d="M6 0 1 4 6 8M1 4H6Q10 4 10 10" stroke="#3a8fd9" /></Ic>
          <Ic w={24} h={22} cl="text-[#a0a0a0]"><path d="M1 1H23V5H1Z" stroke="#37c05a" /><path d="M1 7H23V22H1ZM4 10H20V19H4Z" /></Ic>
        </div>
        <div className="ml-[7px] flex flex-col justify-between py-[10px] h-[84px] mt-[3px]">
          <Chev c={W} />
          <Chev c={W} />
        </div>
      </div>

      {/* font */}
      <div className="w-[500px] h-[91px] mt-[6px] border-r border-[#4a4a4a] pl-[17px] text-[#5d5d5d]">
        <div className="flex items-center h-[35px] mt-[7px]">
          <div className="flex h-[35px] w-[250px] items-center justify-end pr-[6px] rounded-[4px] bg-[#2a2a2a] border border-[#333]"><Chev /></div>
          <div className="ml-[3px] flex h-[35px] w-[78px] items-center justify-between pl-[9px] pr-[5px] rounded-[4px] bg-[#2a2a2a] border border-[#333] text-[16px] text-[#8b8b8b]">18<Chev /></div>
          <div className="w-[40px] text-center text-[24px] font-['Liberation_Sans']">A<sup className="text-[11px] text-[#2d5c92]">^</sup></div>
          <div className="w-[32px] text-center text-[20px]">A<sup className="text-[11px] text-[#2d5c92]">ˇ</sup></div>
          <Sep h="h-[26px]" cl="ml-[18px]" />
          <div className="ml-[18px] text-[24px] text-[#5d5d5d]">A<span className="text-[13px] text-[#6c4a86]">◇</span></div>
        </div>
        <div className="flex items-center h-[38px] mt-[12px]">
          <div className="w-[34px] text-center text-[18px] font-bold">B</div>
          <div className="w-[40px] text-center text-[18px] italic font-['Liberation_Serif']">I</div>
          <div className="w-[36px] text-center text-[18px] underline underline-offset-4">U</div>
          <div className="w-[40px] text-center text-[18px] line-through">ab</div>
          <div className="w-[36px] text-center text-[18px]">x<sup className="text-[10px] text-[#2d5c92]">2</sup></div>
          <div className="w-[44px] text-center text-[18px]">x<sub className="text-[10px] text-[#2d5c92]">2</sub></div>
          <div className="w-[30px] text-center text-[16px] leading-[15px]">AV<div className="text-[#2d5c92] text-[13px] leading-[10px]">↔</div></div>
          <div className="w-[22px] flex justify-center"><Chev /></div>
          <div className="w-[38px] text-center text-[18px]">Aa</div>
          <div className="w-[12px] flex justify-center"><Chev /></div>
          <Sep h="h-[26px]" cl="ml-[16px]" />
          <div className="ml-[4px] w-[48px] flex justify-center">
            <Ic w={24} h={24} cl="text-[#6a6a6a]">
              <path d="M7 15 16 2 20 5 11 17Z" />
              <rect x="1" y="19" width="22" height="5" fill="#b0b030" stroke="none" />
            </Ic>
          </div>
          <div className="w-[10px] flex justify-center"><Chev /></div>
          <div className="w-[44px] flex flex-col items-center text-[18px] leading-[20px]">A<div className="h-[5px] w-[24px] bg-[#b83a40]" /></div>
          <div className="w-[10px] flex justify-center"><Chev /></div>
        </div>
      </div>

      {/* paragraph */}
      <div className="w-[478px] h-[91px] mt-[6px] border-r border-[#4a4a4a] text-[#5d5d5d]">
        <div className="flex items-center h-[35px] mt-[7px] pl-[20px]">
          <Ic w={28} h={24} vb="0 0 26 20" cl="text-[#4d4d4d]"><path d="M1 1H5V5H1ZM1 8H5V12H1ZM1 15H5V19H1Z" fill="#234a73" stroke="#234a73" /><ListLines /></Ic>
          <div className="ml-[6px] w-[12px]"><Chev /></div>
          <Ic w={28} h={24} vb="0 0 26 20" cl="ml-[10px] text-[#4d4d4d]"><path d="M3 1V5M1 8H5V12H1ZM1 15H5M1 19H5" stroke="#234a73" /><ListLines /></Ic>
          <div className="ml-[4px] w-[12px]"><Chev /></div>
          <Sep cl="ml-[11px]" />
          <Ic w={24} h={24} cl="ml-[21px] text-[#4d4d4d]"><path d="M2 3H22M11 9H22M11 15H22M2 21H22" /><path d="M9 12H2M5 9 2 12 5 15" stroke="#2d5c92" /></Ic>
          <Ic w={24} h={24} cl="ml-[15px] text-[#4d4d4d]"><path d="M2 3H22M11 9H22M11 15H22M2 21H22" /><path d="M2 12H9M6 9 9 12 6 15" stroke="#2d5c92" /></Ic>
          <Sep cl="ml-[13px]" />
          <Ic w={28} h={28} cl="ml-[17px] text-[#4d4d4d]"><path d="M12 4H27M12 13H27M12 22H27" /><path d="M5 2V26M2 6 5 2 8 6M2 22 5 26 8 22" stroke="#2d5c92" /></Ic>
          <div className="ml-[10px] w-[12px]"><Chev /></div>
          <Sep cl="ml-[9px]" />
          <Ic w={20} h={18} cl="ml-[25px] text-[#234a73]"><path d="M1 3H9M11 3H19M1 9H9M11 9H19M1 15H9M11 15H19" strokeWidth="1.5" /></Ic>
          <div className="ml-[11px] w-[12px]"><Chev /></div>
          <Ic w={44} h={32} cl="ml-[10px]"><path d="M1 1H24L37 15 24 30H1L11 15Z" fill="#2a4a32" stroke="#2a4a32" /><rect x="16" y="14" width="26" height="17" fill="#2a2a2a" stroke="#666" /><path d="M20 19H38M20 23H38M20 27H38" stroke="#555" /></Ic>
          <div className="ml-[14px] w-[12px]"><Chev /></div>
        </div>
        <div className="flex items-start h-[46px] mt-[11px] pl-[21px]">
          <div className="flex items-center h-[38px]">
            <AlignIcon d="M2 2H22M2 7H14M2 12H22M2 17H14" />
            <div className="w-[14px]" />
            <AlignIcon d="M2 2H22M6 7H18M2 12H22M6 17H18" />
            <div className="w-[14px]" />
            <AlignIcon d="M2 2H22M10 7H22M2 12H22M10 17H22" />
            <div className="w-[14px]" />
            <AlignIcon d="M2 2H22M2 7H22M2 12H22M2 17H22" />
            <Sep cl="ml-[16px]" />
            <Ic w={28} h={30} cl="ml-[20px]"><path d="M5 3V27M2 23 5 27 8 23M12 27V15M9 23 12 27 15 23" stroke="#4d4d4d" /><path d="M17 14 21 2 25 14M18.5 10H23.5" stroke="#234a73" /></Ic>
            <div className="ml-[6px] w-[12px]"><Chev /></div>
            <Ic w={26} h={28} cl="ml-[11px]"><path d="M6 3H2V25H6M20 3H24V25H20" stroke="#4d4d4d" /><path d="M5 14H21M13 2V11M10 6 13 2 16 6M13 26V17M10 22 13 26 16 22" stroke="#234a73" /></Ic>
            <div className="ml-[7px] w-[12px]"><Chev /></div>
          </div>
          <div className="ml-[74px] mt-[6px] w-[96px] shrink-0 text-center leading-[18px] text-[#7c7c7c]">Convert to SmartArt</div>
        </div>
      </div>

      {/* insert */}
      <div className="w-[157px] h-[91px] mt-[6px] border-r border-[#4a4a4a] text-[#efefef]">
        <div className="flex items-center h-[34px] mt-[12px] pl-[20px]">
          <Ic w={42} h={32} cl="text-[#a8a8a8]">
            <rect x="1" y="1" width="40" height="30" fill="#1e1e1e" />
            <path d="M2 30 14 11 24 26 31 17 40 30Z" fill="#0f4fa8" stroke="#7aa7d8" />
            <path d="M33 5Q28 9 32 12Q29 9 33 5Z" fill="#e6a23c" stroke="#e6a23c" />
          </Ic>
          <div className="ml-[10px]"><Chev c={W} /></div>
          <Ic w={26} h={28} cl="ml-[12px] text-[#a8a8a8]"><rect x="2" y="1" width="17" height="17" fill="#1b5fb8" stroke="#1b5fb8" /><circle cx="15" cy="18" r="9" fill="#242424" /></Ic>
          <div className="ml-[7px]"><Chev c={W} /></div>
        </div>
        <div className="flex items-center mt-[4px] h-[30px]">
          <div className="ml-[19px] w-[60px] text-center">Picture</div>
          <Ic w={24} h={22} cl="ml-[16px] mt-[10px]"><rect x="2" y="2" width="20" height="18" stroke="#999" /><path d="M2 2h.1M22 2h.1M2 20h.1M22 20h.1" stroke="#3a8fd9" strokeWidth="4" /><text x="12" y="17" textAnchor="middle" fontSize="15" fill="#3a8fd9" stroke="none">A</text></Ic>
        </div>
      </div>

      {/* drawing */}
      <div className="flex-1 h-[91px] mt-[6px] text-[#efefef]">
        <div className="flex items-center mt-[8px] h-[40px] pl-[20px]">
          <Ic w={46} h={42} cl="text-[#a8a8a8]">
            <rect x="1" y="1" width="40" height="40" rx="2" />
            <path d="M15 36 40 8 43 10 22 38Z" fill="#242424" />
            <path d="M12 40Q13 31 20 31L23 35Q20 42 12 40Z" fill="#2f7fd0" stroke="#2f7fd0" />
          </Ic>
          <div className="ml-[8px]"><Chev c={W} /></div>
        </div>
        <div className="mt-[9px] pl-[20px]">Drawing</div>
      </div>
    </div>
  );
}

function TitleIcons() {
  return (
    <div className="ml-[38px] flex items-center text-[#eaeaea]">
      <Ic w={22} h={24} cl="ml-[6px]"><path d="M1.5 11 11 2 20.5 11M4 9V23H9V15Q9 13 11 13T13 15V23H18V9" strokeLinejoin="round" /></Ic>
      <Ic w={22} h={24} cl="ml-[17px]"><path d="M3 2H19Q21 2 21 4V21Q21 23 19 23H3Q1 23 1 21V4Q1 2 3 2ZM5 2V9H17V2M5 23V14H17V23" /></Ic>
      <Ic w={24} h={28} cl="ml-[17px]"><path d="M3 3V11H11M3 11C8 5 19 4 21 12C22 17 14 22 7 27" strokeLinejoin="round" /></Ic>
      <div className="ml-[6px]"><Chev c="text-[#eaeaea]" /></div>
      <Ic w={26} h={26} cl="ml-[18px]"><path d="M19 3.5A11.5 11.5 0 1 0 24 13M24 2V9H17" /></Ic>
      <Ic w={20} h={26} cl="ml-[17px]"><path d="M2 3Q2 1 4 1H12L18 7V23Q18 25 16 25H4Q2 25 2 23ZM12 1V7H18" strokeLinejoin="round" /></Ic>
      <div className="ml-[22px] flex gap-[3px]">
        <span className="h-[3px] w-[3px] rounded-full bg-[#eaeaea]" />
        <span className="h-[3px] w-[3px] rounded-full bg-[#eaeaea]" />
        <span className="h-[3px] w-[3px] rounded-full bg-[#eaeaea]" />
      </div>
    </div>
  );
}

const tabs = [
  { t: "Insert", w: "w-[90px]" },
  { t: "Draw", w: "w-[81px]" },
  { t: "Design", w: "w-[100px]" },
  { t: "Transitions", w: "w-[139px]" },
  { t: "Animations", w: "w-[138px]" },
  { t: "Slide Show", w: "w-[135px]" },
  { t: "Review", w: "w-[99px]" },
  { t: "View", w: "w-[70px]" },
];

export default function App() {
  return (
    <div className="h-[1863px] w-[1600px] overflow-hidden bg-white pt-[14px] pl-[15px] font-['Liberation_Sans','Noto_Sans_CJK_SC',sans-serif]">
      <div className="h-[1834px] w-[1570px] overflow-hidden rounded-[16px] bg-[#1b1e25] shadow-[0_0_14px_rgba(0,0,0,0.35)]">
        {/* article */}
        <div className="flex h-[771px]">
          <div className="w-[233px] border-r border-[#191b21]" />
          <div className="w-[1323px] pl-[79px] pt-[35px]">
            <p className="w-[1200px] text-[26px] leading-[46.5px] tracking-[0.27px] [word-spacing:1px] text-[#9a9fa7] font-['Noto_Sans_CJK_SC',sans-serif] font-normal">
              <span className="ml-[51px]">这里的 tanh 函数确保隐藏状态元素值在 -1 到 1 之间。需要注意的是，当输出门近似 1 时，记忆</span><br />
              细胞信息将传递到隐藏状态供输出层使用；当输出门近似 0 时，记忆细胞信息只自己保留。下图展示<br />
              了长短期记忆中隐藏状态的计算。
            </p>
            <div className="ml-[220px] mt-[26px] w-[721px]">
              <LstmFigure />
              <div className="text-center text-[20px] leading-[30px] tracking-[0.4px] text-[#7f858e] font-['Noto_Sans_CJK_SC',sans-serif]">长短期记忆中隐藏状态的计算</div>
            </div>
          </div>
          <div className="w-[14px] border-l border-[#2b2e35]" />
        </div>

        {/* powerpoint window */}
        <div className="h-[1063px] overflow-hidden rounded-t-[12px] border-t border-[#5c5c5c] bg-[#242424]">
          <div className="flex h-[44px] items-center bg-[#2b2b2b]">
            <div className="ml-[19px] flex gap-[12px]">
              <span className="h-[17px] w-[17px] rounded-full bg-[#ff5257]" />
              <span className="h-[17px] w-[17px] rounded-full bg-[#fdb022]" />
              <span className="h-[17px] w-[17px] rounded-full bg-[#28c235]" />
            </div>
            <TitleIcons />
            <div className="ml-[216px] flex items-center">
              <svg width="20" height="24" viewBox="0 0 20 24">
                <path d="M5 1H14L19 6V23H5Z" fill="#f4f4f4" />
                <rect x="1" y="6" width="11" height="12" rx="1" fill="#c8432a" />
                <text x="6.5" y="15.5" textAnchor="middle" fontSize="9" fontWeight="bold" fill="#fff">P</text>
                <circle cx="14" cy="12" r="3.5" fill="#e8613c" />
              </svg>
              <div className="ml-[10px] text-[19.5px] font-bold text-white">人工智能导论/第二章 神经网络与深度学习</div>
            </div>
            <div className="flex-1" />
            <Ic w={24} h={24} cl="text-[#e0e0e0]"><circle cx="10" cy="10" r="8" /><path d="M16 16 23 23" /></Ic>
            <Ic w={24} h={26} cl="ml-[27px] mr-[9px] text-[#e0e0e0]"><circle cx="8" cy="10" r="3" /><path d="M2 16H14V19Q14 24 8 24T2 19ZM12 2H22V9H16L14 12V9H12Z" /></Ic>
          </div>
          <div className="flex h-[45px] items-start pt-[10px] pl-[16px] text-[19px] leading-[24px] font-medium text-[#d4d4d4] font-['Inter',sans-serif]">
            <div className="w-[89px] font-bold text-[#f0f0f0]">
              Home
              <div className="mt-[3px] h-[4px] w-[55px] rounded-full bg-[#dcdcdc]" />
            </div>
            {tabs.map((t) => (
              <div key={t.t} className={t.w}>{t.t}</div>
            ))}
            <svg width="20" height="26" viewBox="0 0 20 26" fill="none" stroke="#c8c8c8" strokeWidth="1.2">
              <path d="M6 17Q6 13 4 11A7.5 7.5 0 1 1 16 11Q14 13 14 17ZM7 20H13M8 23H12" />
            </svg>
            <div className="ml-[11px]">Tell me</div>
            <div className="flex-1" />
            <div className="mt-[-3px] mr-[7px] flex h-[35px] w-[97px] items-center justify-center gap-[6px] rounded-[4px] bg-[#555555] text-[17px] font-bold text-[#e0e0e0] font-['Liberation_Sans']">
              <svg width="18" height="18" viewBox="0 0 18 18" fill="none" stroke="#c8c8c8" strokeWidth="1.2">
                <path d="M1 7V17H14V11M5 12Q6 6 12 6V2L17 7 12 11V8Q8 8 5 12Z" />
              </svg>
              Share
            </div>
          </div>
          <Ribbon />
          <div className="h-[3px] bg-[#0c0c0c]" />

          <div className="flex h-[863px]">
            <div className="flex w-[370px] border-r border-[#050505]">
              <div className="flex-1 bg-[#3f3f3f] pt-[7px]">
                <div className="flex flex-col gap-[28px]">
                  <SlideRow n={164}><Thumb164 /></SlideRow>
                  <SlideRow n={165}><Thumb165 /></SlideRow>
                  <SlideRow n={166}><Thumb166 /></SlideRow>
                  <SlideRow n={167}><Thumb167 /></SlideRow>
                  <SlideRow n={168} selected><Thumb168 /></SlideRow>
                </div>
              </div>
              <div className="w-[7px] bg-[#333333]" />
            </div>
            <div className="flex-1 bg-[#1e1e1e] pl-[76px] pt-[163px]">
              <div className="h-[594px] w-[1055px] border-2 border-[#b5b5b5] bg-white">
                <svg width="1051" height="590" viewBox="2 2 1051 590" className="block">
                  <LstmSlide />
                </svg>
              </div>
            </div>
          </div>
        </div>
      </div>
    </div>
  );
}
